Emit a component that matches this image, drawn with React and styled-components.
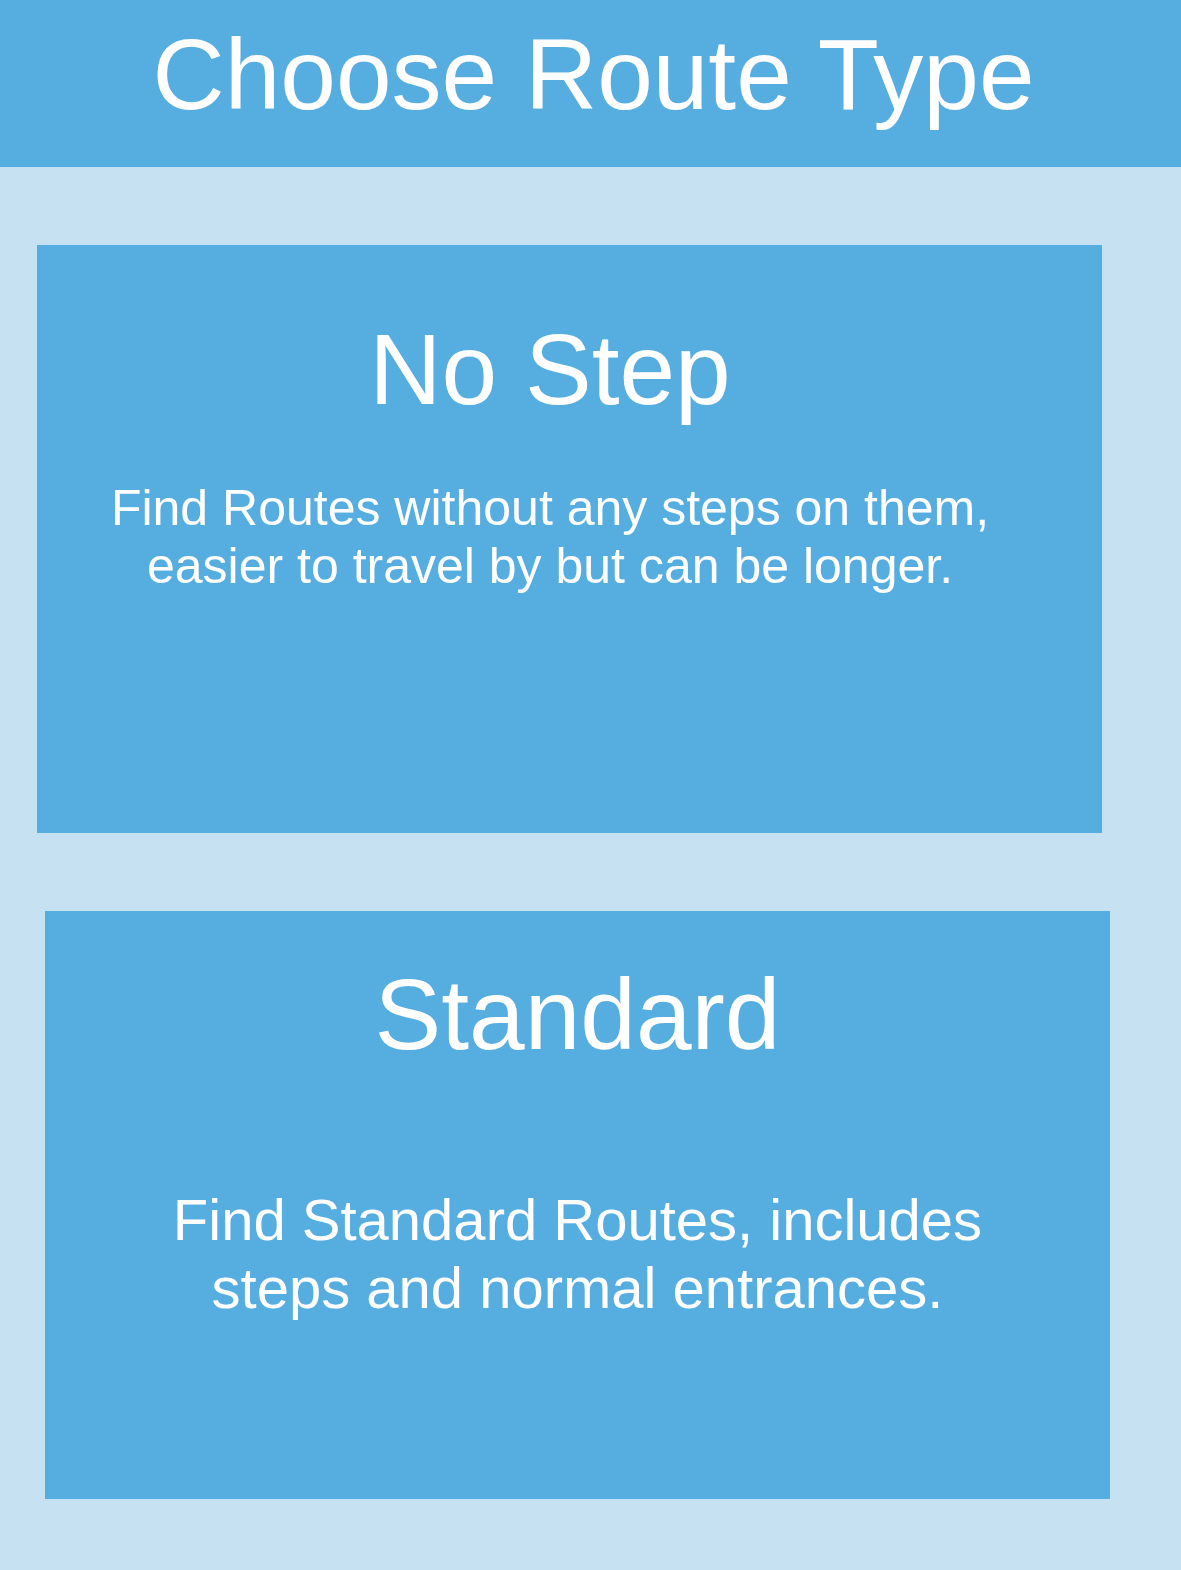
import styled, { createGlobalStyle } from "styled-components";

const GlobalStyle = createGlobalStyle`
  body {
    margin: 0;
    font-family: "Liberation Sans", Arial, sans-serif;
    background: #c5e1f2;
  }
`;

const Page = styled.div`
  min-height: 1570px;
  background: #c5e1f2;
  display: flex;
  flex-direction: column;
`;

const Header = styled.header`
  height: 167px;
  background: #56ade0;
  display: flex;
  justify-content: center;
  padding-left: 6px;
  box-sizing: border-box;
`;

const Title = styled.h1`
  margin: 17px 0 0;
  font-size: 100px;
  font-weight: 400;
  line-height: 115px;
  color: #fff;
`;

const Options = styled.div`
  display: flex;
  flex-direction: column;
  gap: 78px;
  padding-top: 78px;
`;

const Card = styled.button`
  all: unset;
  box-sizing: border-box;
  width: 1065px;
  height: 588px;
  margin-left: ${(p) => p.$indent}px;
  padding: ${(p) => p.$top}px ${(p) => p.$shift}px 0 0;
  background: #56ade0;
  color: #fff;
  display: flex;
  flex-direction: column;
  align-items: center;
  text-align: center;
  cursor: pointer;
`;

const CardTitle = styled.h2`
  margin: 0;
  font-size: 100px;
  font-weight: 400;
  line-height: 115px;
`;

const CardText = styled.p`
  margin: ${(p) => p.$gap}px 0 0;
  font-size: ${(p) => p.$size}px;
  line-height: ${(p) => p.$line}px;
`;

const routes = [
  {
    name: "No Step",
    lines: ["Find Routes without any steps on them,", "easier to travel by but can be longer."],
    indent: 37,
    top: 67,
    shift: 39,
    gap: 52,
    size: 50,
    line: 58,
  },
  {
    name: "Standard",
    lines: ["Find Standard Routes, includes", "steps and normal entrances."],
    indent: 45,
    top: 46,
    shift: 0,
    gap: 114,
    size: 58,
    line: 68,
  },
];

export default function App() {
  return (
    <Page>
      <GlobalStyle />
      <Header>
        <Title>Choose Route Type</Title>
      </Header>
      <Options>
        {routes.map((r) => (
          <Card key={r.name} $indent={r.indent} $top={r.top} $shift={r.shift}>
            <CardTitle>{r.name}</CardTitle>
            <CardText $gap={r.gap} $size={r.size} $line={r.line}>
              {r.lines[0]}
              <br />
              {r.lines[1]}
            </CardText>
          </Card>
        ))}
      </Options>
    </Page>
  );
}
